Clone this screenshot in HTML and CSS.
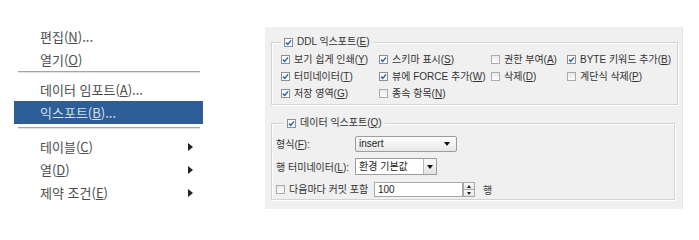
FILE: index.html
```html
<!DOCTYPE html>
<html lang="ko">
<head>
    <meta charset="utf-8">
    <link rel="stylesheet" href="styles.css">
</head>
<body>
    <div class="wrap">

        <ul class="menu">
            <li class="item"><span>편집(<u>N</u>)...</span></li>
            <li class="item"><span>열기(<u>O</u>)</span></li>
            <li class="sep"></li>
            <li class="item"><span>데이터 임포트(<u>A</u>)...</span></li>
            <li class="item active"><span>익스포트(<u>B</u>)...</span></li>
            <li class="sep sep2"></li>
            <li class="item"><span>테이블(<u>C</u>)</span><i class="arrow"></i></li>
            <li class="item"><span>열(<u>D</u>)</span><i class="arrow"></i></li>
            <li class="item"><span>제약 조건(<u>E</u>)</span><i class="arrow"></i></li>
        </ul>

        <div class="panel">
            <fieldset class="group ddl">
                <legend>
                    <label class="chk"><span class="cb"><svg viewBox="0 0 7 7"><path d="M1 3.6l1.8 1.8L6 1.4"/></svg></span><span>DDL 익스포트(<u>E</u>)</span></label>
                </legend>
                <div class="opts">
                    <label class="chk"><span class="cb"><svg viewBox="0 0 7 7"><path d="M1 3.6l1.8 1.8L6 1.4"/></svg></span><span>보기 쉽게 인쇄(<u>Y</u>)</span></label>
                    <label class="chk"><span class="cb"><svg viewBox="0 0 7 7"><path d="M1 3.6l1.8 1.8L6 1.4"/></svg></span><span>스키마 표시(<u>S</u>)</span></label>
                    <label class="chk"><span class="cb off"></span><span>권한 부여(<u>A</u>)</span></label>
                    <label class="chk"><span class="cb"><svg viewBox="0 0 7 7"><path d="M1 3.6l1.8 1.8L6 1.4"/></svg></span><span>BYTE 키워드 추가(<u>B</u>)</span></label>

                    <label class="chk"><span class="cb"><svg viewBox="0 0 7 7"><path d="M1 3.6l1.8 1.8L6 1.4"/></svg></span><span>터미네이터(<u>T</u>)</span></label>
                    <label class="chk"><span class="cb"><svg viewBox="0 0 7 7"><path d="M1 3.6l1.8 1.8L6 1.4"/></svg></span><span>뷰에 FORCE 추가(<u>W</u>)</span></label>
                    <label class="chk"><span class="cb off"></span><span>삭제(<u>D</u>)</span></label>
                    <label class="chk"><span class="cb off"></span><span>계단식 삭제(<u>P</u>)</span></label>

                    <label class="chk"><span class="cb"><svg viewBox="0 0 7 7"><path d="M1 3.6l1.8 1.8L6 1.4"/></svg></span><span>저장 영역(<u>G</u>)</span></label>
                    <label class="chk"><span class="cb off"></span><span>종속 항목(<u>N</u>)</span></label>
                </div>
            </fieldset>

            <fieldset class="group data">
                <legend>
                    <label class="chk"><span class="cb"><svg viewBox="0 0 7 7"><path d="M1 3.6l1.8 1.8L6 1.4"/></svg></span><span>데이터 익스포트(<u>Q</u>)</span></label>
                </legend>
                <div class="rows">
                    <div class="row">
                        <span class="lbl">형식(<u>F</u>):</span>
                        <div class="select"><span>insert</span><i class="down"></i></div>
                    </div>
                    <div class="row">
                        <span class="lbl">행 터미네이터(<u>L</u>):</span>
                        <div class="combo"><span>환경 기본값</span><b class="btn"><i class="down"></i></b></div>
                    </div>
                    <div class="row">
                        <label class="chk commit"><span class="cb off"></span><span>다음마다 커밋 포함</span></label>
                        <div class="num">100</div>
                        <div class="spin"><b><i class="up"></i></b><b><i class="down small"></i></b></div>
                        <span class="unit">행</span>
                    </div>
                </div>
            </fieldset>
        </div>

    </div>
</body>
</html>
```

FILE: styles.css
```css
/* export dialog */

* {
    padding: 0;
    margin: 0;
    box-sizing: border-box;
}

body {
    background: #fff;
    font-family: "Noto Sans CJK KR", sans-serif;
}

.wrap {
    display: flex;
    align-items: flex-start;
}

/* context menu */

.menu {
    list-style: none;
    width: 189px;
    margin: 25px 0 0 14px;
    font-size: 13px;
    color: #4d4d4d;
}

.item {
    display: flex;
    justify-content: space-between;
    align-items: center;
    height: 23px;
    line-height: 23px;
    padding: 0 10px 0 26px;
}

.active {
    background: #2d5e98;
    color: #d3deec;
}

.sep {
    height: 2px;
    margin: 0 3px 5px 4px;
    border-top: 1px solid #a5a5a5;
    border-bottom: 1px solid #e4e4e4;
}

.sep2 {
    margin-top: 3px;
    margin-bottom: 6px;
}

.arrow {
    width: 0;
    height: 0;
    border-left: 5px solid #222;
    border-top: 4px solid transparent;
    border-bottom: 4px solid transparent;
}

/* export panel */

.panel {
    width: 418px;
    margin: 27px 0 0 62px;
    padding: 8px 7px 9px 6px;
    background: #f0f0f0;
    border-right: 1px solid #e3e3e3;
    font-family: "Liberation Sans", "Noto Sans CJK KR", sans-serif;
    font-size: 10px;
    color: #333;
}

.group {
    border: 1px solid #d3d3d3;
    box-shadow: inset 1px 1px 0 #fff, 1px 1px 0 #fff;
}

.group legend {
    padding: 0 3px;
    line-height: 14px;
    background: #f0f0f0;
}

.ddl {
    padding: 2px 6px 2px 9px;
}

.data {
    margin-top: 11px;
    padding: 5px 6px 1px 4px;
}

.data legend {
    margin-left: 8px;
}

.chk {
    display: flex;
    align-items: center;
    gap: 4px;
    white-space: nowrap;
    line-height: 14px;
}

.cb {
    flex: none;
    width: 9px;
    height: 9px;
    border: 1px solid #8d8f92;
    background: #fff;
    display: flex;
    align-items: center;
    justify-content: center;
}

.cb.off {
    border-color: #a9abad;
    background: linear-gradient(#e9e9e9, #fdfdfd);
}

.cb svg {
    width: 7px;
    height: 7px;
    fill: none;
    stroke: #2a63b7;
    stroke-width: 1.5;
}

.opts {
    display: grid;
    grid-template-columns: 98px 112px 76px auto;
    grid-auto-rows: 17px;
    align-items: center;
}

.rows {
    display: flex;
    flex-direction: column;
    gap: 6px;
}

.row {
    display: flex;
    align-items: center;
    height: 17px;
}

.lbl {
    width: 79px;
    white-space: nowrap;
}

.select {
    width: 102px;
    height: 16px;
    padding: 0 6px 0 3px;
    border: 1px solid #9d9d9d;
    border-radius: 2px;
    background: linear-gradient(#fdfdfd, #e7e7e7);
    display: flex;
    align-items: center;
    justify-content: space-between;
    color: #222;
}

.down {
    width: 0;
    height: 0;
    border-top: 4px solid #111;
    border-left: 3.5px solid transparent;
    border-right: 3.5px solid transparent;
}

.up {
    width: 0;
    height: 0;
    border-bottom: 3px solid #222;
    border-left: 2.5px solid transparent;
    border-right: 2.5px solid transparent;
}

.down.small {
    border-top: 3px solid #222;
    border-left-width: 2.5px;
    border-right-width: 2.5px;
}

.combo {
    width: 82px;
    height: 17px;
    border: 1px solid #9d9d9d;
    background: #fff;
    display: flex;
}

.combo span {
    flex: 1;
    padding-left: 3px;
    line-height: 15px;
    color: #222;
}

.combo .btn {
    width: 13px;
    border-left: 1px solid #b8b8b8;
    background: linear-gradient(#fbfbfb, #e3e3e3);
    display: flex;
    align-items: center;
    justify-content: center;
}

.commit {
    width: 98px;
}

.num {
    width: 89px;
    height: 15px;
    padding-left: 3px;
    border: 1px solid #a8a8a8;
    background: #fff;
    line-height: 13px;
    color: #222;
}

.spin {
    width: 12px;
    height: 15px;
    display: flex;
    flex-direction: column;
}

.spin b {
    flex: 1;
    border: 1px solid #a8a8a8;
    background: linear-gradient(#fbfbfb, #e4e4e4);
    display: flex;
    align-items: center;
    justify-content: center;
}

.spin b + b {
    border-top: none;
}

.unit {
    margin-left: 8px;
}
```
